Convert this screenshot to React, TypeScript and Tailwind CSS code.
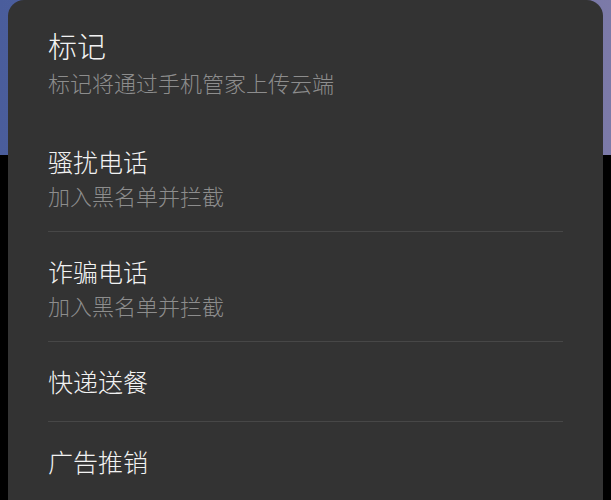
import React from "react";

const FONT = { fontFamily: '"Noto Sans CJK SC", "Noto Sans", sans-serif' };

const ITEMS: { title: string; sub?: string }[] = [
  { title: "骚扰电话", sub: "加入黑名单并拦截" },
  { title: "诈骗电话", sub: "加入黑名单并拦截" },
  { title: "快递送餐" },
  { title: "广告推销" },
];

export default function App() {
  return (
    <div className="relative w-[611px] h-[500px] overflow-hidden bg-black" style={FONT}>
      {/* backdrop behind the sheet */}
      <div className="h-[155px] bg-gradient-to-r from-[#4a5d9c] via-[#5a6aa4] to-[#7c7aa8]" />

      {/* sheet */}
      <div className="absolute left-[8px] right-[8px] top-0 bottom-0 bg-[#333333] rounded-t-[16px] px-10 font-light">
        <div className="pt-[27px] pb-[26px]">
          <p className="text-[29px] leading-9 text-[#f2f2f2]">标记</p>
          <p className="mt-[5px] text-[22px] leading-7 text-[#8d8d8d]">标记将通过手机管家上传云端</p>
        </div>

        {ITEMS.map((it, i) => (
          <div
            key={it.title}
            className={`pt-[23px] ${it.sub ? "pb-[22px]" : "pb-6"} ${i < ITEMS.length - 1 ? "border-b border-[#474747]" : ""}`}
          >
            <p className="text-[25px] leading-8 text-[#f2f2f2]">{it.title}</p>
            {it.sub && <p className="mt-1 text-[22px] leading-7 text-[#8d8d8d]">{it.sub}</p>}
          </div>
        ))}
      </div>
    </div>
  );
}
